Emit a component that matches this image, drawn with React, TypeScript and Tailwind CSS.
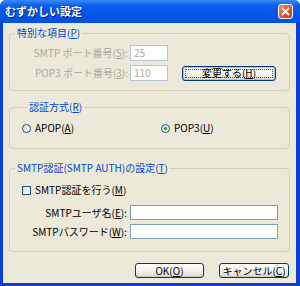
import React from 'react';

const font = "font-['Noto_Sans_CJK_JP',sans-serif]";

function XpButton({ children, focused = false, className = '' }: { children: React.ReactNode; focused?: boolean; className?: string }) {
  return (
    <div
      className={`h-[15px] rounded-[3px] border border-[#003C74] bg-linear-to-b from-[#FFFFFF] via-[#F4F3EE] to-[#DAD6CB] flex items-center justify-center text-[10px] leading-none text-black ${
        focused ? 'p-[2px] shadow-[inset_0_0_0_1px_#A9C4EE]' : 'shadow-[inset_0_-1px_0_#CDC9BE]'
      } ${className}`}
    >
      {focused ? (
        <span className="w-full h-full border border-dotted border-[#555] flex items-center justify-center">{children}</span>
      ) : (
        children
      )}
    </div>
  );
}

function Radio({ checked = false }: { checked?: boolean }) {
  return (
    <span className="w-[9px] h-[9px] rounded-full border border-[#1C5180] bg-linear-to-br from-[#DCDCD7] to-[#FFFFFF] flex items-center justify-center shrink-0">
      {checked && <span className="w-[3px] h-[3px] rounded-full bg-[#21A121] shadow-[0_0_1px_#5BD05B]" />}
    </span>
  );
}

export default function App() {
  return (
    <div className={`w-[300px] h-[286px] flex flex-col bg-[#0A3FD6] rounded-t-[6px] overflow-hidden ${font}`}>
      {/* title bar */}
      <div className="h-[23px] shrink-0 flex items-center justify-between pl-[5px] pr-[7px] bg-linear-to-b from-[#3A8BF8] via-[#0A5CEC] via-25% to-[#0050E0]">
        <span className="text-white font-bold text-[11px] leading-none [text-shadow:1px_1px_0_#0A1E70]">むずかしい設定</span>
        <div className="w-[15px] h-[15px] rounded-[3px] border border-white bg-linear-to-br from-[#F08A62] via-[#E2542C] to-[#C8391A] flex items-center justify-center">
          <svg width="9" height="9" viewBox="0 0 9 9">
            <path d="M1.5 1.5 L7.5 7.5 M7.5 1.5 L1.5 7.5" stroke="white" strokeWidth="1.8" strokeLinecap="square" />
          </svg>
        </div>
      </div>

      {/* body */}
      <div className="flex-1 ml-[3px] mr-[4px] mb-[3px] bg-[#ECE9D8] pl-[6px] pr-[6px] pt-[4px] flex flex-col text-[10px] text-black">
        <fieldset className="border border-[#D0D0BF] rounded-[4px] pt-[6px] pb-[9px] m-0">
          <legend className="ml-[5px] px-[2px] text-[#0046D5] leading-[12px]">
            特別な項目(<span className="underline">P</span>)
          </legend>
          <div className="flex items-center h-[16px]">
            <span className="w-[118px] text-right text-[#ACA899] leading-none whitespace-nowrap">
              SMTP ポート番号(<span className="underline">S</span>):
            </span>
            <div className="ml-[2px] w-[38px] h-[16px] bg-white border border-[#B7C5DA] text-[#ACA899] px-[3px] flex items-center leading-none">25</div>
          </div>
          <div className="flex items-center h-[16px] mt-[4px]">
            <span className="w-[118px] text-right text-[#ACA899] leading-none whitespace-nowrap">
              POP3 ポート番号(<span className="underline">3</span>):
            </span>
            <div className="ml-[2px] w-[38px] h-[16px] bg-white border border-[#B7C5DA] text-[#ACA899] px-[3px] flex items-center leading-none">110</div>
            <XpButton focused className="ml-[14px] w-[94px] h-[14px]">
              変更する(<span className="underline">H</span>)
            </XpButton>
          </div>
        </fieldset>

        <fieldset className="border border-[#D0D0BF] rounded-[4px] mt-[10px] pt-[8px] pb-[13px] pl-[12px] m-0">
          <legend className="ml-[5px] px-[2px] text-[#0046D5] leading-[12px]">
            認証方式(<span className="underline">R</span>)
          </legend>
          <div className="flex items-center h-[14px]">
            <label className="w-[139px] flex items-center gap-[4px] leading-none">
              <Radio />
              <span>
                APOP(<span className="underline">A</span>)
              </span>
            </label>
            <label className="flex items-center gap-[4px] leading-none">
              <Radio checked />
              <span>
                POP3(<span className="underline">U</span>)
              </span>
            </label>
          </div>
        </fieldset>

        <fieldset className="border border-[#D0D0BF] rounded-[4px] mt-[13px] pt-[10px] pb-[12px] m-0">
          <legend className="ml-[5px] px-[2px] text-[#0046D5] leading-[12px]">
            SMTP認証(SMTP AUTH)の設定(<span className="underline">T</span>)
          </legend>
          <label className="flex items-center gap-[4px] h-[12px] pl-[12px] leading-none">
            <span className="w-[9px] h-[9px] border border-[#1C5180] bg-linear-to-br from-[#DCDCD7] to-[#FFFFFF] shrink-0" />
            <span>
              SMTP認証を行う(<span className="underline">M</span>)
            </span>
          </label>
          <div className="flex items-center h-[15px] mt-[9px]">
            <span className="w-[117px] text-right leading-none whitespace-nowrap">
              SMTPユーザ名(<span className="underline">E</span>):
            </span>
            <div className="ml-[3px] w-[148px] h-[15px] bg-white border border-[#7F9DB9]" />
          </div>
          <div className="flex items-center h-[15px] mt-[4px]">
            <span className="w-[117px] text-right leading-none whitespace-nowrap">
              SMTPパスワード(<span className="underline">W</span>):
            </span>
            <div className="ml-[3px] w-[148px] h-[15px] bg-white border border-[#7F9DB9]" />
          </div>
        </fieldset>

        <div className="mt-[11px] flex justify-end gap-[15px] pr-[1px]">
          <XpButton className="w-[69px]">
            OK(<span className="underline">O</span>)
          </XpButton>
          <XpButton className="w-[70px]">
            キャンセル(<span className="underline">C</span>)
          </XpButton>
        </div>
      </div>
    </div>
  );
}
